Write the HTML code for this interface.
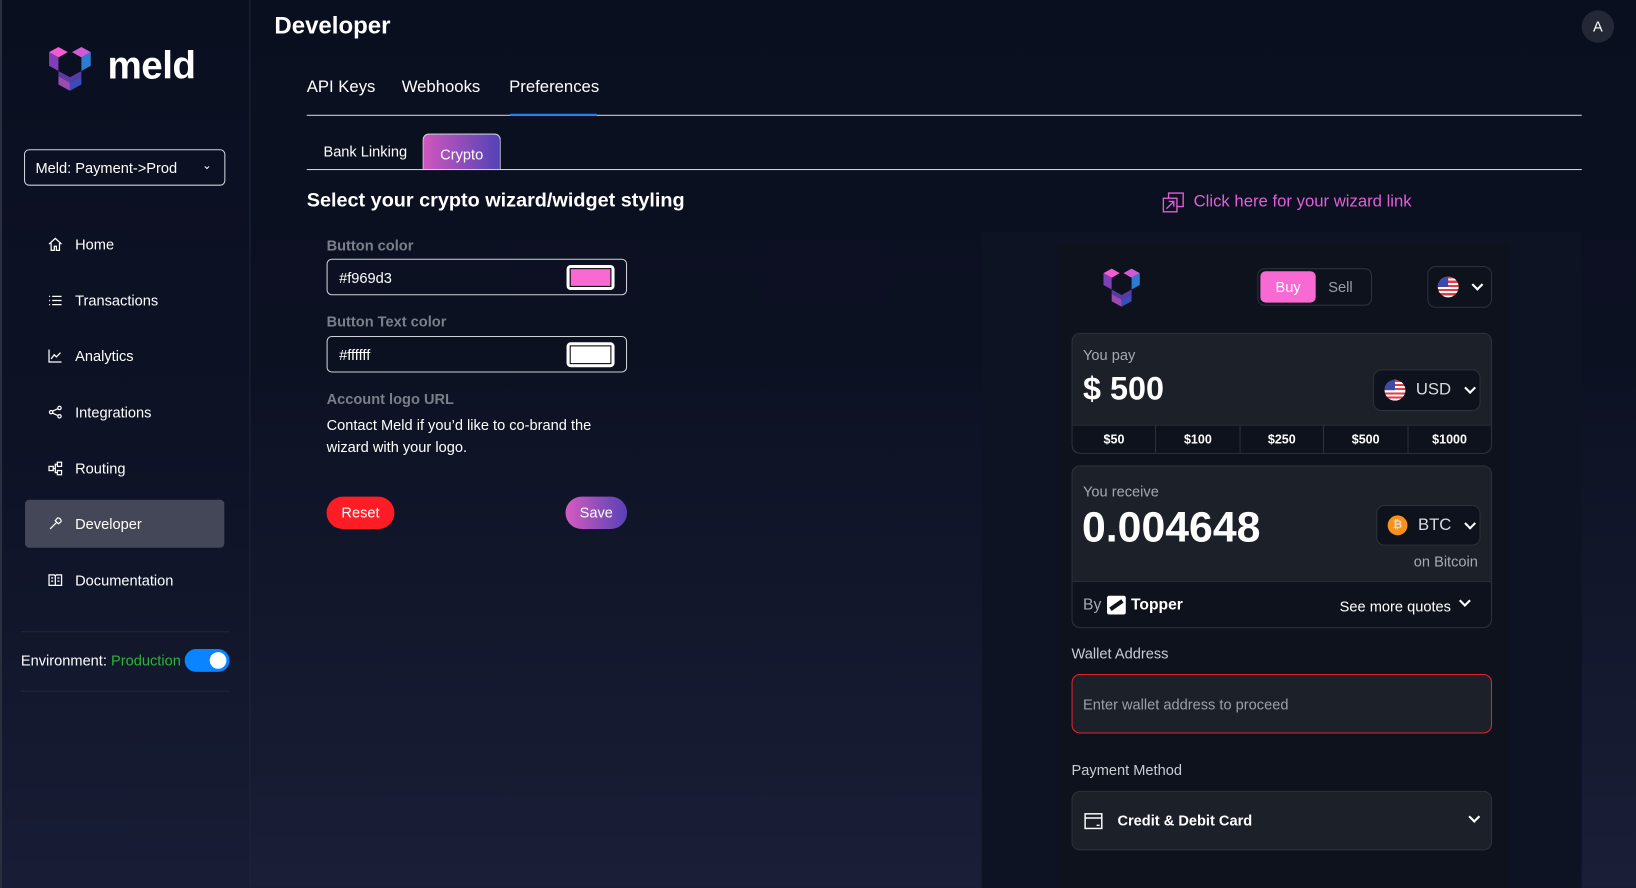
<!DOCTYPE html>
<html><head><meta charset="utf-8"><style>
*{box-sizing:border-box;margin:0;padding:0}
html,body{width:1636px;height:888px;overflow:hidden;background:#0b1020}
#w{position:absolute;left:0;top:0;width:1568px;height:851px;transform:scale(1.04337);transform-origin:0 0;font-family:"Liberation Sans",sans-serif;color:#fff;background:linear-gradient(180deg,#0a0f20 0%,#0c1122 40%,#1a1e37 100%)}
.a{position:absolute}
.side{left:0;top:0;width:240px;height:851px;border-right:1px solid #1f2436;border-left:2px solid #2a2f40;background:linear-gradient(180deg,#0a0f20 0%,#0d1225 50%,#181d35 100%)}
.nav{left:46px;font-size:14px;display:flex;align-items:center;gap:12px}
.nav svg{width:14px;height:14px;stroke:#fff;fill:none;stroke-width:1.2}
.lbl{font-size:14px;font-weight:bold;color:#7b7f8a}
.inp{border:1px solid #cfd2d8;border-radius:5px;height:35px;width:288px;font-size:14px;padding:9px 11px}
.sw{position:absolute;right:11px;top:5px;width:46px;height:24px;background:#fff;border-radius:4px;padding:3px}
.sw div{width:100%;height:100%;border:1px solid #000}
.card{background:#1c2029;border:1px solid #2c313b;border-radius:8px}
.pill{background:#0e121c;border:1px solid #2c313b;border-radius:8px}
.flag{width:20px;height:20px;border-radius:50%;background:repeating-linear-gradient(180deg,#e63946 0 2px,#fff 2px 4px);position:relative;overflow:hidden}
.flag:after{content:"";position:absolute;left:0;top:0;width:10px;height:10px;background:#3b4ba8}
.chev{width:8px;height:8px;border-right:2px solid #fff;border-bottom:2px solid #fff;transform:rotate(45deg);margin-top:-4px}
</style></head><body><div id="w">
<div class="a side"></div>
<svg class="a" style="left:44px;top:41px" width="46" height="46" viewBox="0 0 46 46"><path d="M3 9l9-5 9 5-9 5z" fill="#f45ad1"/><path d="M25 9l9-5 9 5-9 5z" fill="#d35ad6"/><path d="M3 9l9 5v13l-9-5z" fill="#7f3fb8"/><path d="M43 9l-9 5v13l9-5z" fill="#2a7dd0"/><path d="M12 32l11 6v8l-11-6z" fill="#9b4bb0"/><path d="M34 32l-11 6v8l11-6z" fill="#3b4bb8"/><path d="M12 27v5l11 6 11-6v-5l-11 6z" fill="#5a3aa8"/></svg>
<div class="a" style="left:103px;top:42px;font-size:37px;letter-spacing:-0.5px;font-weight:bold">meld</div>
<div class="a" style="left:23px;top:143px;width:193px;height:35px;border:1px solid #d0d3d9;border-radius:5px;font-size:14px;padding:9px 10px">Meld: Payment-&gt;Prod<span style="position:absolute;right:12px;top:8px;font-size:11px">&#8964;</span></div>
<div class="a nav" style="top:226px"><svg viewBox="0 0 14 14"><path d="M1 7L7 1.5 13 7M3 6v7h3V9h2v4h3V6"/></svg>Home</div>
<div class="a nav" style="top:280px"><svg viewBox="0 0 14 14"><path d="M1 3h1M1 7h1M1 11h1M4 3h9M4 7h9M4 11h9"/></svg>Transactions</div>
<div class="a nav" style="top:333px"><svg viewBox="0 0 14 14"><path d="M1 1v12h12M3 10l3-4 2 2 4-4"/></svg>Analytics</div>
<div class="a nav" style="top:387px"><svg viewBox="0 0 14 14"><circle cx="3" cy="7" r="1.6"/><circle cx="11" cy="3" r="1.6"/><circle cx="11" cy="11" r="1.6"/><path d="M4.5 6l5-2.3M4.5 8l5 2.3"/></svg>Integrations</div>
<div class="a nav" style="top:441px"><svg viewBox="0 0 14 14"><rect x="1" y="5" width="4" height="4"/><rect x="9" y="1" width="4" height="4"/><rect x="9" y="9" width="4" height="4"/><path d="M5 7h2v-4h2M7 7v4h2"/></svg>Routing</div>
<div class="a" style="left:24px;top:479px;width:191px;height:46px;background:#444757;border-radius:4px"></div>
<div class="a nav" style="top:494px"><svg viewBox="0 0 14 14"><path d="M2 12l6-6M9 1.5a3 3 0 0 1 3.5 3.5L10 7 7 4z"/></svg>Developer</div>
<div class="a nav" style="top:548px"><svg viewBox="0 0 14 14"><path d="M1 2h5l1 1 1-1h5v10H1zM7 3v9M3 5h2M3 8h2M9 5h2M9 8h2"/></svg>Documentation</div>
<div class="a" style="left:20px;top:605px;width:200px;border-top:1px solid #232839"></div>
<div class="a" style="left:20px;top:625px;font-size:14px">Environment: <span style="color:#2bb534">Production</span></div>
<div class="a" style="left:177px;top:622px;width:43px;height:22px;border-radius:11px;background:#0a84ff"><div style="position:absolute;right:3px;top:3px;width:16px;height:16px;border-radius:50%;background:#fff"></div></div>
<div class="a" style="left:20px;top:662px;width:200px;border-top:1px solid #232839"></div>

<div class="a" style="left:263px;top:11px;font-size:23px;font-weight:bold">Developer</div>
<div class="a" style="left:1516px;top:10px;width:31px;height:31px;border-radius:50%;background:#242836;font-size:14px;text-align:center;line-height:31px">A</div>
<div class="a" style="left:294px;top:75px;font-size:16px">API Keys</div>
<div class="a" style="left:385px;top:75px;font-size:16px">Webhooks</div>
<div class="a" style="left:488px;top:75px;font-size:16px">Preferences</div>
<div class="a" style="left:294px;top:110px;width:1222px;border-top:1px solid #d4d6db"></div>
<div class="a" style="left:489px;top:109px;width:83px;height:2px;background:#1e7df0"></div>
<div class="a" style="left:310px;top:137px;font-size:14px">Bank Linking</div>
<div class="a" style="left:405px;top:128px;width:75px;height:35px;border-radius:6px 6px 0 0;border:1px solid #d4d6db;border-bottom:none;background:linear-gradient(90deg,#d156c0,#5143b6);font-size:14px;text-align:center;padding-top:11px">Crypto</div>
<div class="a" style="left:294px;top:162px;width:1222px;border-top:1px solid #d4d6db"></div>
<div class="a" style="left:294px;top:182px;font-size:19px;font-weight:bold">Select your crypto wizard/widget styling</div>

<div class="a lbl" style="left:313px;top:227px">Button color</div>
<div class="a inp" style="left:313px;top:248px">#f969d3<div class="sw"><div style="background:#f969d3"></div></div></div>
<div class="a lbl" style="left:313px;top:300px">Button Text color</div>
<div class="a inp" style="left:313px;top:322px">#ffffff<div class="sw"><div style="background:#fff"></div></div></div>
<div class="a lbl" style="left:313px;top:374px">Account logo URL</div>
<div class="a" style="left:313px;top:397px;font-size:14px;line-height:21px">Contact Meld if you’d like to co-brand the<br>wizard with your logo.</div>
<div class="a" style="left:313px;top:476px;width:65px;height:31px;border-radius:16px;background:#ff1d25;font-size:14px;text-align:center;line-height:31px">Reset</div>
<div class="a" style="left:542px;top:476px;width:59px;height:31px;border-radius:16px;background:linear-gradient(90deg,#d55bc1,#5642b6);font-size:14px;text-align:center;line-height:31px">Save</div>

<svg class="a" style="left:1114px;top:183px" width="22" height="22" viewBox="0 0 22 22" fill="none" stroke="#e25ed6" stroke-width="1.3"><rect x="1" y="7" width="13" height="13"/><path d="M6 7V2h14v13h-6M4 17l7-7M6 10h5v5"/></svg>
<div class="a" style="left:1144px;top:185px;font-size:16px;color:#e25ed6">Click here for your wizard link</div>

<div class="a" style="left:941px;top:222px;width:575px;height:629px;background:#0e1324"></div>
<div class="a" style="left:1013px;top:233px;width:433px;height:618px;background:#0e121c"></div>
<svg class="a" style="left:1055px;top:254px" width="40" height="40" viewBox="0 0 46 46"><path d="M3 9l9-5 9 5-9 5z" fill="#f45ad1"/><path d="M25 9l9-5 9 5-9 5z" fill="#d35ad6"/><path d="M3 9l9 5v13l-9-5z" fill="#7f3fb8"/><path d="M43 9l-9 5v13l9-5z" fill="#2a7dd0"/><path d="M12 32l11 6v8l-11-6z" fill="#9b4bb0"/><path d="M34 32l-11 6v8l11-6z" fill="#3b4bb8"/><path d="M12 27v5l11 6 11-6v-5l-11 6z" fill="#5a3aa8"/></svg>
<div class="a pill" style="left:1205px;top:257px;width:110px;height:36px;border-radius:7px"></div>
<div class="a" style="left:1208px;top:260px;width:53px;height:30px;border-radius:5px;background:#f969d3;font-size:14px;text-align:center;line-height:30px">Buy</div>
<div class="a" style="left:1273px;top:267px;font-size:14px;color:#9aa0aa">Sell</div>
<div class="a pill" style="left:1368px;top:255px;width:62px;height:40px;display:flex;align-items:center;justify-content:center;gap:14px"><div class="flag"></div><div class="chev"></div></div>

<div class="a card" style="left:1027px;top:319px;width:403px;height:116px"></div>
<div class="a" style="left:1038px;top:332px;font-size:14px;color:#a5a9b2">You pay</div>
<div class="a" style="left:1038px;top:355px;font-size:31px;font-weight:bold">$ 500</div>
<div class="a pill" style="left:1316px;top:354px;width:103px;height:40px;display:flex;align-items:center;padding-left:10px;gap:10px;font-size:16px;color:#d8dbe0"><div class="flag"></div>USD<div class="chev" style="margin-left:4px"></div></div>
<div class="a" style="left:1028px;top:407px;width:401px;height:27px;background:#0e121c;border-top:1px solid #2c313b;border-radius:0 0 8px 8px;display:flex;font-size:12px;font-weight:bold">
<div style="flex:1;text-align:center;line-height:27px;border-right:1px solid #2c313b">$50</div><div style="flex:1;text-align:center;line-height:27px;border-right:1px solid #2c313b">$100</div><div style="flex:1;text-align:center;line-height:27px;border-right:1px solid #2c313b">$250</div><div style="flex:1;text-align:center;line-height:27px;border-right:1px solid #2c313b">$500</div><div style="flex:1;text-align:center;line-height:27px">$1000</div></div>

<div class="a card" style="left:1027px;top:446px;width:403px;height:156px"></div>
<div class="a" style="left:1038px;top:463px;font-size:14px;color:#a5a9b2">You receive</div>
<div class="a" style="left:1037px;top:482px;font-size:41px;font-weight:bold">0.004648</div>
<div class="a pill" style="left:1319px;top:484px;width:100px;height:39px;display:flex;align-items:center;padding-left:10px;gap:10px;font-size:16px;color:#d8dbe0"><div style="width:19px;height:19px;border-radius:50%;background:#f7931a;font-size:11px;text-align:center;line-height:19px;font-weight:bold">₿</div>BTC<div class="chev" style="margin-left:4px"></div></div>
<div class="a" style="left:1355px;top:530px;font-size:14px;color:#a5a9b2">on Bitcoin</div>
<div class="a" style="left:1028px;top:557px;width:401px;height:44px;background:#0e121c;border-top:1px solid #2c313b;border-radius:0 0 8px 8px"></div>
<div class="a" style="left:1038px;top:571px;font-size:15px;color:#a5a9b2">By</div>
<div class="a" style="left:1061px;top:571px;width:18px;height:18px;background:#fff;border-radius:2px"><div style="position:absolute;left:2px;top:7px;width:14px;height:4px;background:#0e121c;transform:rotate(-35deg)"></div></div>
<div class="a" style="left:1084px;top:571px;font-size:15px;font-weight:bold">Topper</div>
<div class="a" style="left:1284px;top:573px;font-size:14px">See more quotes</div>
<div class="a chev" style="left:1400px;top:576px"></div>

<div class="a" style="left:1027px;top:618px;font-size:14px;color:#c8ccd3">Wallet Address</div>
<div class="a" style="left:1027px;top:646px;width:403px;height:57px;background:#1c2029;border:1px solid #e3232b;border-radius:8px;font-size:14px;color:#9aa0aa;padding:20px 10px">Enter wallet address to proceed</div>
<div class="a" style="left:1027px;top:730px;font-size:14px;color:#c8ccd3">Payment Method</div>
<div class="a card" style="left:1027px;top:758px;width:403px;height:57px"></div>
<svg class="a" style="left:1039px;top:779px" width="18" height="16" viewBox="0 0 18 16" fill="none" stroke="#fff" stroke-width="1.4"><rect x="1" y="1" width="16" height="14"/><path d="M1 5h16M12 12h3"/></svg>
<div class="a" style="left:1071px;top:778px;font-size:14px;font-weight:bold">Credit &amp; Debit Card</div>
<div class="a chev" style="left:1409px;top:783px"></div>
</div></body></html>
